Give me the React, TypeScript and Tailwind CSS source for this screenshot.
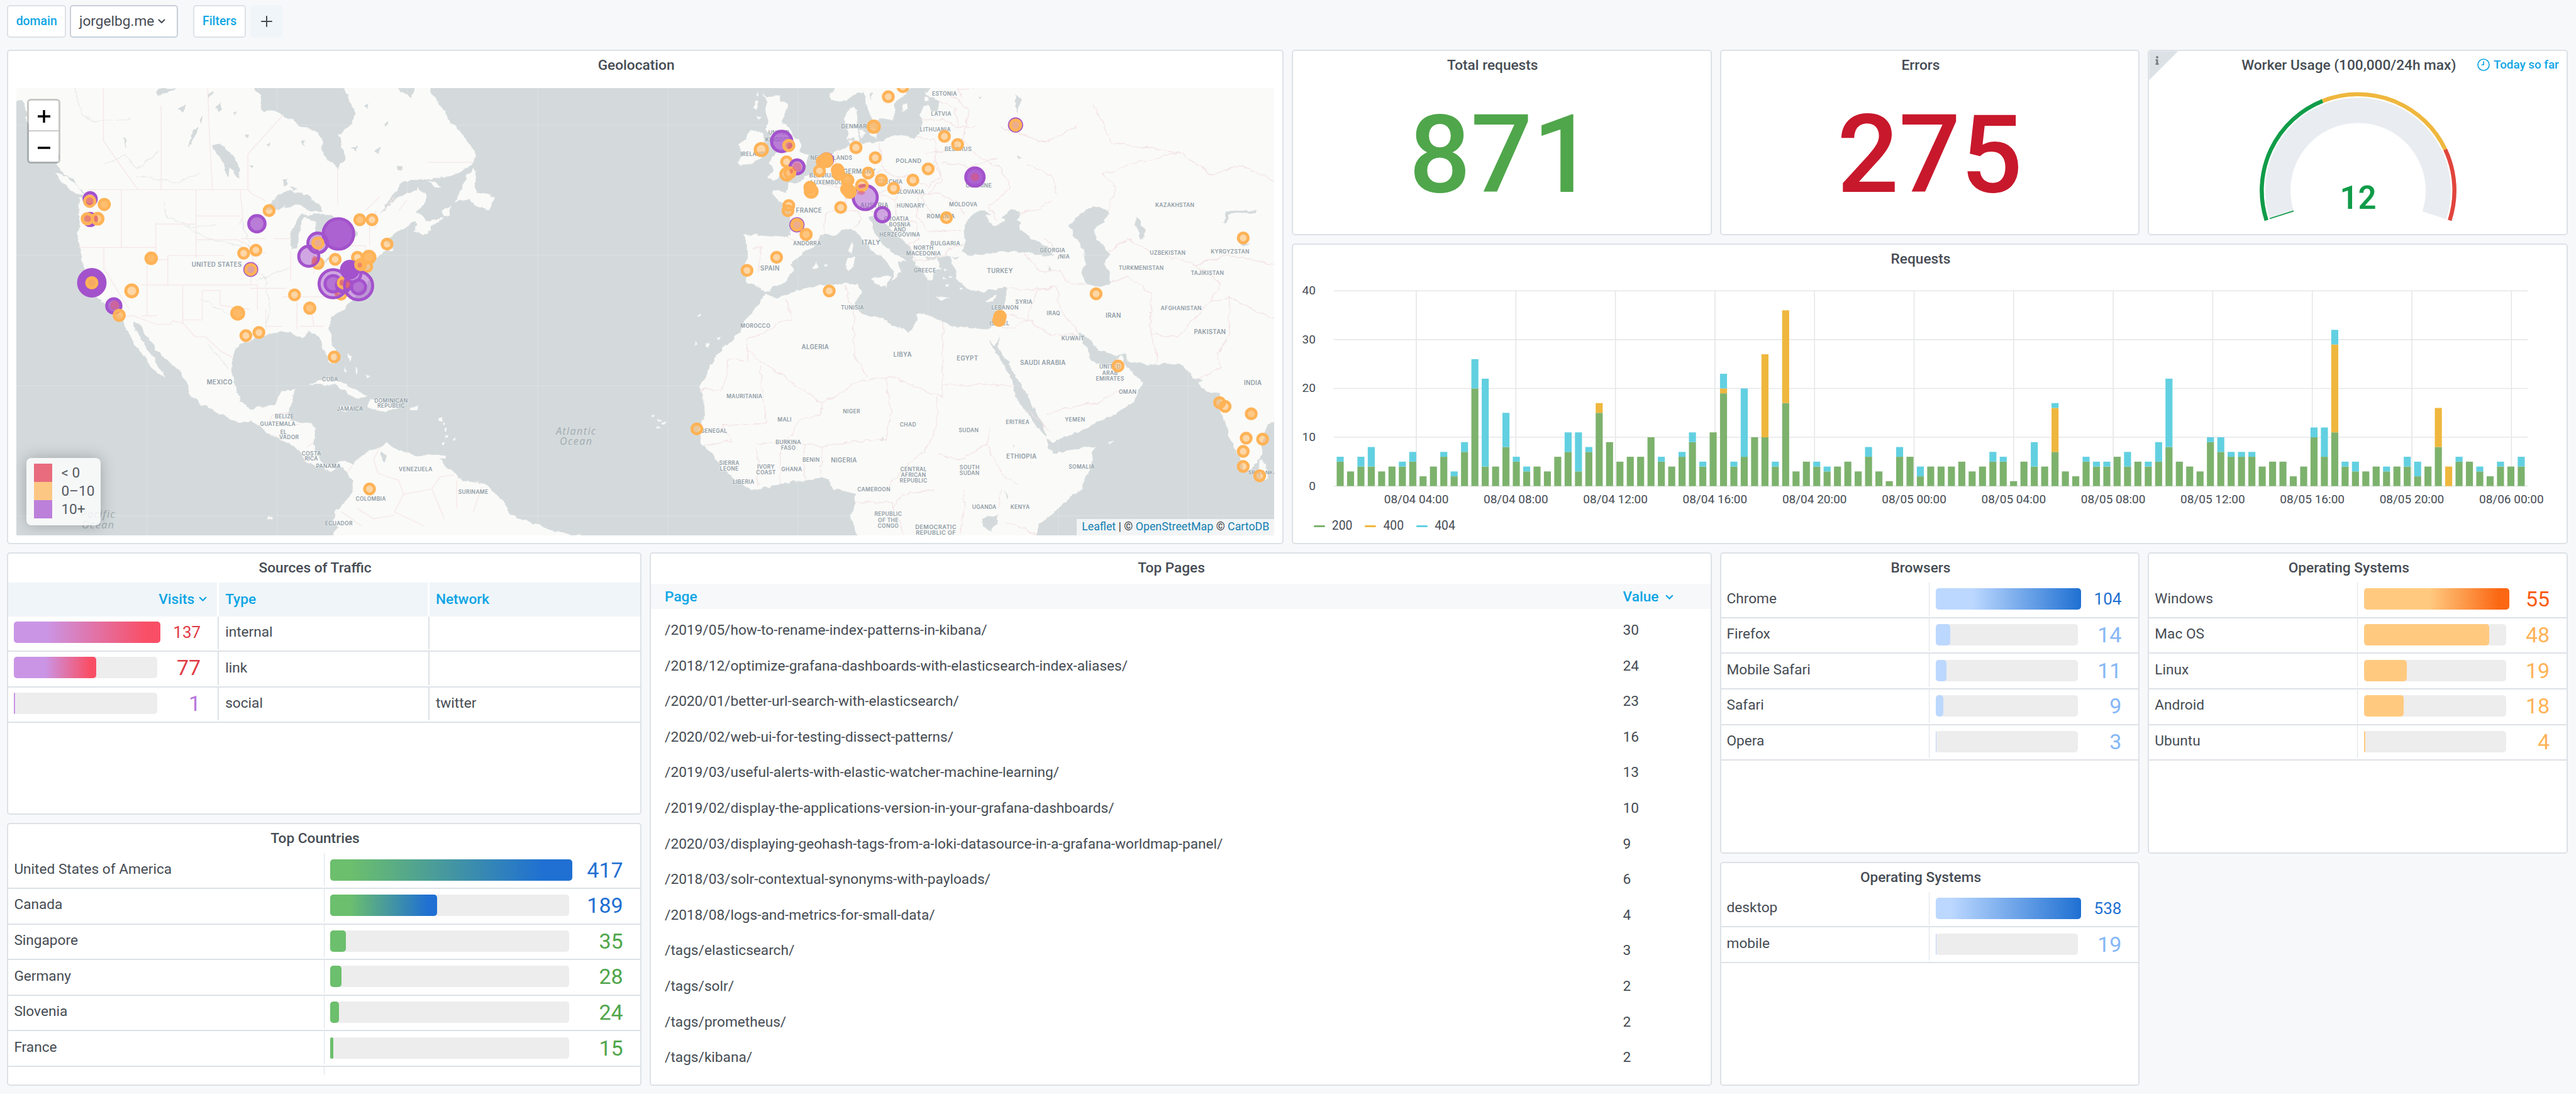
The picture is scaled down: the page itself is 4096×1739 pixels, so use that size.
import React from "react";
import { FaInfo } from "react-icons/fa";

/* ------------------------------------------------------------------ */
/* Map data                                                            */
/* ------------------------------------------------------------------ */

type Frame = { ox: number; oy: number; sx: number; sy: number };

const AMERICAS: Frame = { ox: 0, oy: 0, sx: 1.225, sy: 1.4519 };
const EAST: Frame = { ox: 1240, oy: 90, sx: 1.2062, sy: 1.5838 };
const GULF: Frame = { ox: 460, oy: 400, sx: 3, sy: 3 };
const EUROPE: Frame = { ox: 1480, oy: 160, sx: 3, sy: 3 };

const frameTransform = (f: Frame) => `translate(${f.ox} ${f.oy}) scale(${1 / f.sx} ${1 / f.sy})`;

const WATER = "#d4dadc";
const LAND = "#fafaf8";

const americasLand = [
  "M30 240L36 282 52 300 66 350 100 400 140 440 136 470 152 492 176 508 188 532 210 556 202 566 188 568 192 600 190 640 186 690 195 722 205 780 220 822 235 850 260 870 280 890 295 905 300 930 318 962 325 985 345 1010 362 1046 378 1062 395 1080 391 1064 375 1030 362 1002 343 975 327 945 322 918 336 925 350 955 365 980 377 1000 402 1025 432 1060 450 1090 455 1120 482 1150 530 1182 580 1206 602 1198 622 1216 660 1245 690 1262 702 1268 725 1292 738 1320 770 1332 795 1346 815 1328 830 1332 838 1350 848 1370 848 1400 830 1432 808 1465 800 1490 815 1502 800 1527V1560H1400V1527L1378 1527 1330 1510 1300 1500 1262 1485 1225 1468 1220 1445 1197 1410 1165 1380 1122 1372 1095 1352 1070 1328 1058 1310 1070 1296 1000 1300 970 1290 952 1280 930 1265 905 1280 882 1290 860 1310 848 1328 830 1314 800 1325 780 1320 762 1300 755 1262 760 1225 750 1205 700 1200 695 1180 700 1150 712 1108 680 1115 662 1150 632 1162 602 1165 580 1145 565 1100 558 1050 565 1000 575 985 602 970 635 955 680 945 702 950 725 965 745 945 770 960 775 990 790 1025 805 1042 812 1010 800 970 790 930 805 900 830 874 850 854 862 832 885 810 890 790 880 770 892 748 902 738 922 722 946 712 945 700 932 690 945 668 970 652 1000 630 1000 660 1018 670 1050 640 1064 622 1028 628 1002 605 1022 582 1026 556 1010 535 985 545 950 570 915 610 940 560 970 520 990 510 1020 512 1070 505 1110 490 1140 465 1145 432 1125 400 1105 370 1080 340 1062 300 1040 270 1035 240H1000L990 275 965 262 955 240H828L840 280 856 320 850 350 815 385 820 410 832 455 812 482 795 460 780 440 775 400 765 375 735 362 690 335 660 312 632 318 625 270 600 240Z",
  "M134 490L160 500 185 528 208 560 190 552 165 535 142 508Z",
  "M1140 476L1125 500 1112 540 1096 574 1130 570 1150 590 1182 597 1187 560 1168 546 1150 548 1142 530 1148 500Z",
  "M1028 515L1050 518 1063 534 1048 532Z",
  "M1064 600L1086 588 1082 612 1066 618Z",
  "M745 1102L760 1088 785 1080 822 1090 860 1112 888 1130 850 1136 832 1116 795 1096 762 1096Z",
  "M886 1158L892 1140 925 1138 965 1162 925 1170 888 1165Z",
  "M818 1160L846 1160 846 1172 820 1170Z",
  "M984 1160H1008V1168H986Z",
  "M1058 1296H1072V1308H1060Z",
  "M648 1470L658 1478 652 1482 644 1478Z",
  "M836 1012L848 1018 846 1032 840 1022ZM852 1050L862 1060 858 1066ZM878 1068L890 1078 884 1080ZM832 1040L838 1056 832 1060Z",
  "M1060 1190h5v8h-5zM1066 1206h5v8h-5zM1070 1222h5v8h-5zM1072 1238h5v8h-5zM1066 1262h5v8h-5zM1090 1248h5v5h-5z",
];

const americasWater = [
  "M636 596L652 580 672 552 700 544 740 556 772 590 778 602 750 600 720 582 690 590 660 600Z",
  "M512 412L530 408 560 440 578 480 574 508 560 490 545 470 530 450 518 436Z",
  "M540 440L552 480 550 502 540 480Z",
  "M378 262L392 250 430 250 400 262 384 270Z",
  "M918 1290L930 1296 930 1312 922 1318Z",
  "M430 310L444 298 440 320ZM460 372L478 360 468 392 452 420 458 396ZM520 300L534 290 530 318ZM682 510L694 508 692 526 684 528ZM600 470L608 466 606 480ZM810 335L826 330 822 352 808 356ZM955 470L970 472 968 486 958 484ZM902 425L918 420 912 436ZM850 420L862 416 858 430ZM700 530L720 540 708 544ZM590 385L598 380 596 394ZM640 410L650 408 646 418ZM300 390L306 400 300 420ZM500 270L512 262 506 282ZM725 405L735 400 732 415ZM880 300L890 296 886 310ZM925 350L938 348 930 360ZM560 320L568 316 566 330ZM480 340L488 330 484 350Z",
  "M36 300L50 320 62 360 56 360 44 330ZM40 285L56 290 66 330 60 330Z",
];

const gulfWater = [
  "M345 272L330 222 340 150 362 110 400 68 424 66 396 120 384 170 384 222 370 264Z",
  "M410 74L440 62 500 60 560 70 600 86 560 100 530 150 520 172 492 172 484 150 470 100 440 80Z",
  "M700 186L716 150 726 170 722 190Z",
  "M470 390L560 330 580 300 520 350Z",
];

const eastLand = [
  "M320 765L305 750 275 740 270 700 268 690 278 650 275 615 270 590 290 585 330 590 370 593 378 585 382 545 380 520 360 485 335 462 335 450 370 455 375 430 400 424 415 405 435 395 450 370 470 340 500 320 520 313 515 280 510 240 510 205 530 185 537 200 540 240 530 262 538 290 550 302 570 302 600 290 622 280 650 275 672 290 686 270 692 240 685 212 692 185 702 182 715 205 730 198 732 170 710 160 702 150 715 120H1560V1160L1527 1165 1508 1182 1500 1220 1497 1262 1490 1290 1462 1328 1450 1300 1430 1240 1410 1180 1400 1130 1396 1082 1370 1078 1345 1050 1360 1040 1335 1030 1320 1005 1300 987 1240 992 1182 982 1172 955 1150 962 1112 950 1085 912 1060 888 1066 905 1080 935 1090 968 1105 992 1132 995 1166 962 1176 1000 1216 1046 1192 1110 1142 1150 1062 1200 1000 1232 988 1226 980 1182 950 1110 920 1040 892 980 872 935 876 900 864 936 850 912 843 890 860 940 880 980 905 1040 912 1090 935 1132 960 1180 988 1222 986 1250 1010 1268 1100 1245 1095 1290 1067 1380 1022 1430 970 1490 950 1560H545L530 1495 520 1470 530 1420 535 1395 510 1387 480 1377 470 1352 450 1346 400 1355 340 1370 290 1384 260 1362 215 1312 190 1265 165 1232 160 1200 175 1150 172 1100 164 1060 200 970 225 932 260 890 270 850 300 812Z",
  "M288 264L314 270 320 298 312 350 262 376 254 362 270 340 257 305 270 290Z",
  "M1494 1288L1508 1308 1512 1345 1498 1352 1488 1330Z",
  "M1130 1232L1144 1234 1136 1240Z",
  "M152 920l8 10-8 6zM176 930l10-4-6 14zM204 908l10-4-6 14zM160 834h8v5h-8zM62 1160h8v6h-8zM74 1172h8v6h-8zM60 1186h10v6h-10zM50 1150h6v6h-6z",
];

const mediterranean =
  "M300 772L330 762 336 750 366 738 380 715 386 700 382 680 400 650 440 620 446 590 480 586 500 576 520 568 536 580 546 600 570 632 602 662 626 702 620 732 630 722 640 700 634 672 656 668 626 645 610 630 590 606 576 572 566 532 588 528 598 546 612 562 640 600 666 626 670 670 690 692 705 732 718 726 720 702 736 692 726 662 756 655 762 672 770 702 776 732 800 755 830 766 860 756 892 750 890 790 880 832 865 870 845 880 800 875 770 880 720 846 696 832 680 838 676 862 660 890 620 870 592 850 546 832 530 800 546 772 540 740 500 742 440 746 386 762 346 786 322 772 300 790Z";

const eastWater = [
  "M830 508L800 540 790 575 792 606 786 640 800 648 840 650 882 636 930 642 972 650 1004 652 986 624 950 600 922 570 926 546 916 540 924 516 900 508 880 536 850 540 856 522Z",
  "M1095 498L1060 530 1040 565 1056 602 1076 640 1080 682 1066 702 1080 738 1112 752 1136 738 1136 702 1124 672 1138 650 1130 636 1108 600 1098 570 1120 548 1134 520 1122 505Z",
  "M1198 530L1206 540 1222 570 1216 598 1206 592 1200 560Z",
  "M1405 545L1410 516 1440 508 1486 512 1482 520 1440 518 1420 524 1412 548Z",
  "M834 1470L872 1460 868 1490 854 1510 836 1496Z",
  "M1440 612h28l-12 10zM886 1380l8 30-4 2zM990 680l8 16-6 4zM916 340l12 8-8 6zM908 1240l4 12-4 4zM592 1218l6 8-4 4zM915 150l10 16-8 40-4-20z",
  "M700 655l20 2 8 6-20 4zM756 654l26 2-10 6z",
];

const eastIslands = [
  "M570 722L616 718 606 752 580 738Z",
  "M514 660L530 655 530 690 516 702 510 680Z",
  "M520 622L528 610 528 648 518 640Z",
  "M720 778L738 780 758 784 736 788Z",
  "M838 790L870 778 858 796Z",
  "M430 686L442 676 446 686 436 692ZM458 680h10v5h-10z",
  "M842 526L866 520 886 546 866 560 850 546Z",
  "M744 690l8 6-6 4zM756 712l8 6-6 4zM738 720l8 4-6 4zM748 740l8 4-6 6zM780 752l8 6-6 4z",
];

const europeLand = [
  "M488 20L455 70 470 100 522 118 560 104 590 80 632 64 655 60 670 130 690 192 712 234 745 236 752 212 822 226 840 172 836 130 862 95 900 70 940 20Z",
  "M60 60L88 92 140 74 162 80 160 112 206 140 190 190 165 235 202 246 232 310 280 362 286 420 326 430 322 480 292 512 250 536 182 546 120 582 90 566 130 520 112 492 98 470 130 420 150 400 118 372 106 340 110 300 80 284 92 232 72 180 92 130Z",
  "M628 290L650 280 664 310 640 330ZM700 262L732 280 724 330 700 320 690 290ZM886 140L912 120 906 160 890 182Z",
  "M1020 60L1050 56 1046 84 1020 82ZM1018 98h22v16h-22z",
  "M0 150l20-40 16 10-14 40zM24 70l16-12v30zM30 200l20 10-10 16z",
  "M562 240L600 200 620 260 630 340 570 350Z",
];
const europeWater = ["M655 90l20 40-10 10zM1330 92l18 2-12 12zM690 80l20-20-10 50zM560 352l30-30 6 30z"];

const borders = {
  americas:
    "M212 540H597L607 552 640 572M249 250V400L290 470 332 540M388 300V540M500 250L505 400 512 540M597 540V438L683 325M813 480V580M1030 462H1140M292 540V705M190 705H375V740M375 635V705M375 638H472M472 540V735M472 615H580M472 683H572L600 700M250 705V765L310 880M354 740V900M375 740H404M404 728H540M404 728V812M340 812H620M440 812V925M340 900H378M487 828V912H440M487 828H530V870L602 882M604 770V812M602 822H690M620 812V882M640 880V930M578 540L585 620 576 640M580 680H640M600 700L610 720H640M610 740V770M660 680H700M715 850V940M746 855L756 930M720 930H780M640 930H680M680 846H780L862 832M700 715V800M756 720V780M800 700H880M880 700V730M890 640V700M905 600V650M925 600L950 560M960 600L980 570M880 600L915 560M290 905L320 900 378 925H410L415 915 440 920 470 960 495 960 530 1000 560 1020M645 1215L655 1185 672 1180 695 1176M690 1215L720 1210M740 1275L755 1262M838 1345L848 1330M915 1275L900 1310 910 1350 960 1370 972 1410 950 1460 1020 1500M972 1410L1040 1395 1060 1360M1100 1370V1450M1160 1390L1140 1460M860 1450L900 1480 950 1470M1060 1360L1095 1355M1040 1395L1070 1480M822 1460L870 1500",
  east:
    "M370 790L382 850 350 860 320 890 277 912V978H232L219 1070H165M277 950L455 1112 550 1040 605 1035M455 1112L450 1150 400 1165 372 1230 300 1240M305 995L322 1175 215 1182M512 745L515 790 528 830 530 960 560 1030M740 860V1092L615 1030 605 1035 618 1130 605 1225M740 1055H905M725 1095V1180L705 1250 660 1300 605 1380M455 1250L530 1230 605 1225M455 1250L450 1340M730 1270L780 1290 845 1240 850 1190M845 1240L880 1330 920 1370M300 1250V1370M355 1260V1365M412 1240V1350M380 1230L455 1250M215 1182L240 1230 175 1240M935 1130L1000 1200M985 1145L1060 1120 1110 1110 1175 1060M875 830L940 850 965 760 1010 750 1020 820 1060 890M880 870L910 880 940 850 1000 900 1060 895M893 750L935 760 1010 750M1020 700L1040 740 1080 740M930 640L970 700 1020 700M1135 735L1180 720 1235 770 1235 900 1250 985M1235 900L1300 905 1370 800 1400 740 1340 680 1235 640 1180 600 1130 640M1340 680L1420 650 1527 680M1370 800L1420 780 1420 900 1390 960 1400 1000 1340 1040M1420 780L1527 850M1130 520L1150 440 1120 400 1180 370 1300 330 1380 400 1450 370 1527 420M1000 480L960 510 920 520M870 540L850 500 900 440 880 380 820 340 790 290 800 200 760 150M790 290L740 330 700 330M720 330L740 420 690 470 720 530M940 370L1000 400 1010 460M530 1420H620V1440L650 1520M620 1440L640 1400 720 1380M790 1380V1460L780 1520M880 1380L870 1440M890 1480L960 1520M980 600L1020 640M1100 180L1140 300 1300 330M880 250L980 300 1060 250",
  europe:
    "M985 225L1130 220 1200 270 1320 260M965 325L1060 340 1085 360 1070 480 1110 560 1040 620 930 560 860 560 770 520 760 420 740 350M1110 480L1270 495 1360 480 1440 440M760 520L640 600 750 650 860 600M570 340L620 350M500 400L490 480 470 560 500 620 560 660 540 760 620 760M400 540L470 560M330 545L420 600 500 620M200 915L300 960 400 920M0 980L50 980 40 1120M860 560L870 640 960 660 1110 660 1200 700 1250 780M740 660L830 700 870 640M830 700L850 800 960 830 980 920 920 960M800 760L830 830 900 860M980 680L970 790 1040 880 1230 880M920 960L960 1060 1140 1030 1160 980 1240 960M1320 36L1210 40 1230 100M1090 110L1200 160 1210 270M620 760L640 800 590 860M660 760L740 770 800 760M420 920L430 780 500 740",
};

const riverPaths =
  "M180 250L200 330 230 345 310 340M250 470L300 440 330 480 380 430M395 570L400 620 470 650 520 640M580 620L600 700 610 760 640 800 650 880 640 940M440 640L500 680 580 700M330 500L430 520 480 490M620 800L700 760M480 850L560 900M550 1050L500 980";

type Marker = [x: number, y: number, r: number, kind: "o" | "p", fill?: number];

const gulfMarkers: Marker[] = [
  [207, 39, 38, "o"], [135, 117, 57, "p", 0.75], [57, 291, 38, "o"], [129, 273, 38, "o"],
  [99, 387, 44, "p", 0.6], [99, 387, 39, "o", 0.45], [22, 645, 44, "o", 0.9], [70, 777, 38, "o"], [147, 759, 38, "o"],
  [357, 537, 38, "o"], [447, 615, 39, "o", 0.75], [591, 903, 38, "o"], [742, 93, 38, "o", 0.75],
  [814, 93, 38, "o"], [903, 237, 38, "o"], [597, 327, 38, "o"], [495, 350, 39, "o", 0.8],
  [441, 309, 68, "p"], [494, 230, 67, "p"], [616, 177, 99, "p", 0.9], [495, 231, 39, "o", 0.6],
  [728, 315, 38, "o"], [796, 314, 44, "o", 0.9], [783, 370, 38, "o"],
  [632, 532, 38, "o"], [585, 471, 92, "p"], [585, 471, 57, "p", 0.6], [645, 480, 50, "p", 0.7],
  [645, 465, 39, "o", 0.6], [735, 483, 92, "p", 0.5], [683, 388, 58, "p", 1], [700, 410, 58, "p", 0.2],
  [735, 490, 50, "p", 0.6], [748, 358, 39, "o", 0.9],
];
const gulfReds: [number, number, number, number][] = [
  [475, 333, 17, 26], [672, 475, 15, 24], [635, 465, 12, 16], [608, 532, 14, 8], [742, 360, 12, 14],
];

const americasMarkers: Marker[] = [
  [217, 566, 15, "p"], [216, 573, 13, "o"], [251, 582, 13, "o", 0.85], [217, 625, 15, "p"],
  [210, 623, 13, "o", 0.7], [235, 623, 13.5, "o", 0.7], [364, 736, 13.3, "o", 0.9], [221, 806, 29, "p", 1],
  [221, 806, 13, "o", 0.9], [317, 829, 14.6, "o"], [274, 872, 17, "p", 0.8], [287, 899, 13, "o", 0.75],
  [890, 1395, 12.7, "o"],
];

const europeMarkers: Marker[] = [
  [800, 87, 38, "o"], [886, 28, 38, "o"], [714, 264, 42, "o", 0.75], [171, 351, 69, "p", 0.75], [213, 375, 39, "o", 0.5],
  [51, 399, 45, "o"], [200, 471, 38, "o"], [262, 501, 50, "p"], [200, 545, 43, "o"], [219, 536, 39, "o"],
  [609, 387, 39, "o"], [723, 447, 38, "o"], [435, 460, 45, "p", 0.9], [411, 470, 39, "o", 0.9], [434, 455, 40, "o", 1],
  [436, 468, 40, "o", 1], [394, 525, 38, "o"], [501, 520, 40, "o", 1], [507, 542, 40, "o", 0.9], [681, 537, 38, "o"],
  [664, 682, 80, "p"], [560, 580, 40, "o", 0.9], [557, 632, 41, "o", 1], [572, 648, 42, "o", 1], [759, 579, 39, "o", 0.75],
  [831, 627, 38, "o"], [644, 610, 40, "o"], [338, 622, 39, "o", 0.9], [345, 645, 44, "o", 0.9], [213, 729, 38, "o"],
  [208, 760, 38, "o"], [261, 843, 45, "p"], [261, 843, 40, "o", 0.6], [315, 900, 39, "o", 0.75], [519, 741, 38, "o"],
  [765, 783, 51, "p"], [1131, 321, 38, "o"], [1209, 369, 38, "o"], [1035, 513, 38, "o"], [945, 579, 38, "o"],
  [1311, 561, 63, "p", 0.9], [1143, 801, 38, "o"], [141, 1035, 38, "o"],
];
const europeReds: [number, number, number, number][] = [
  [262, 501, 28, 28], [217, 376, 16, 18], [228, 526, 10, 14], [646, 612, 22, 12], [640, 654, 22, 12], [1311, 561, 24, 24],
];

const eastMarkers: Marker[] = [
  [913, 245, 15, "p"], [913, 245, 13, "o", 0.6], [1453, 597, 12.7, "o"], [276, 698, 12.7, "o"], [471, 762, 12.7, "o"],
  [1104, 771, 12.7, "o"], [876, 842, 13.3, "o", 1], [874, 853, 13.3, "o", 0.9], [1156, 996, 12.7, "o"], [157, 1192, 12.7, "o"],
  [1397, 1110, 12.7, "o"], [1410, 1122, 12.7, "o"], [1472, 1145, 12.7, "o", 0.7], [1460, 1221, 12.7, "o"],
  [1499, 1224, 12.7, "o"], [1453, 1262, 12.7, "o"], [1453, 1309, 12.7, "o"], [1492, 1338, 12.7, "o"],
];

type Label = [text: string, x: number, y: number, size?: number];

const americasLabels: Label[] = [
  ["UNITED STATES", 522, 754, 12], ["MEXICO", 529, 1090, 12], ["CUBA", 795, 1081], ["JAMAICA", 843, 1166],
  ["DOMINICAN", 942, 1143], ["REPUBLIC", 942, 1157], ["BELIZE", 685, 1188], ["GUATEMALA", 669, 1210], ["EL", 683, 1233],
  [".VADOR", 694, 1248], ["COSTA", 750, 1294], ["RICA", 750, 1308], ["PANAMA", 791, 1329], ["VENEZUELA", 1001, 1338],
  ["COLOMBIA", 893, 1423], ["SURINAME", 1140, 1403], ["ECUADOR", 816, 1494],
];
const eastLabels: Label[] = [
  ["KAZAKHSTAN", 1291, 495], ["UZBEKISTAN", 1274, 644], ["KYRGYZSTAN", 1422, 639], ["TURKMENISTAN", 1211, 690],
  ["TAJIKISTAN", 1368, 707], ["GEORGIA", 1001, 635], ["/NIA", 1027, 656], ["TURKEY", 876, 699, 12], ["GREECE", 698, 699],
  ["SYRIA", 933, 797], ["LEBANON", 888, 814], ["IRAQ", 1003, 832], ["IRAN", 1145, 839, 12], ["AFGHANISTAN", 1306, 816],
  ["PAKISTAN", 1374, 889, 12], ["KUWAIT", 1049, 911], ["ISRAEL", 875, 864], ["SAUDI ARABIA", 978, 985, 12],
  ["EGYPT", 799, 972, 12], ["LIBYA", 645, 960, 12], ["ALGERIA", 438, 937, 12], ["MOROCCO", 296, 871], ["TUNISIA", 526, 814],
  ["UNITED", 1137, 998], ["ARAB", 1137, 1017], ["EMIRATES", 1137, 1035], ["OMAN", 1179, 1076], ["INDIA", 1476, 1048, 12],
  ["YEMEN", 1054, 1163], ["ERITREA", 918, 1171], ["MAURITANIA", 270, 1090], ["MALI", 365, 1163], ["NIGER", 524, 1138],
  ["CHAD", 658, 1178], ["SUDAN", 802, 1197], ["SENEGAL", 198, 1199], ["BURKINA", 374, 1234], ["FASO", 374, 1251],
  ["BENIN", 428, 1289], ["NIGERIA", 506, 1289, 12], ["SIERRA", 234, 1298], ["LEONE", 234, 1315], ["IVORY", 321, 1310],
  ["COAST", 321, 1327], ["GHANA", 382, 1318], ["LIBERIA", 268, 1358], ["CENTRAL", 671, 1318], ["AFRICAN", 671, 1336],
  ["REPUBLIC", 671, 1354], ["SOUTH", 804, 1312], ["SUDAN", 804, 1330], ["ETHIOPIA", 927, 1278, 12], ["SOMALIA", 1070, 1311],
  ["CAMEROON", 577, 1380], ["UGANDA", 839, 1436], ["KENYA", 924, 1436], ["REPUBLIC", 611, 1458], ["OF THE", 611, 1476],
  ["CONGO", 611, 1494], ["DEMOCRATIC", 724, 1497, 11.5], ["REPUBLIC OF", 724, 1515, 11.5], ["SRI LANKA", 1499, 1327, 10],
];
const europeLabels: Label[] = [
  ["ESTONIA", 1132, 68], ["LATVIA", 1112, 189], ["DENMARK", 610, 262, 11], ["LITHUANIA", 1078, 281], ["UNITED", 155, 301],
  ["KINGDOM", 155, 339], ["IRELAND", 0, 425], ["NETHERLANDS", 464, 448], ["POLAND", 920, 464, 11.5], ["BELARUS", 1212, 396, 11],
  ["GERMANY", 630, 527, 12], ["BELGIUM", 415, 550, 11.5], ["LUXEMBOURG", 460, 594], ["CZECHIA", 810, 591], ["SLOVAKIA", 930, 650],
  ["UKRAINE", 1334, 610, 11], ["AUSTRIA", 718, 729, 12], ["HUNGARY", 933, 730], ["MOLDOVA", 1242, 724], ["FRANCE", 332, 759, 12],
  ["ROMANIA", 1110, 790, 11], ["CROATIA", 848, 810], ["BOSNIA", 868, 840], ["AND", 868, 871], ["HERZEGOVINA", 868, 902],
  ["ANDORRA", 321, 953], ["ITALY", 699, 947, 12.5], ["BULGARIA", 1137, 950, 11], ["NORTH", 1008, 981], ["MACEDONIA", 1008, 1011],
  ["SPAIN", 102, 1099, 12],
];

function MapLabels({ frame, items }: { frame: Frame; items: Label[] }) {
  return (
    <>
      {items.map(([t, x, y, size = 10.5], i) => (
        <text
          key={t + i}
          x={frame.ox + x / frame.sx}
          y={frame.oy + y / frame.sy}
          fontSize={size}
          dominantBaseline="central"
          textAnchor="middle"
        >
          {t}
        </text>
      ))}
    </>
  );
}

function Markers({ frame, items, unit }: { frame: Frame; items: Marker[]; unit: number }) {
  return (
    <>
      {items.map(([x, y, r, kind, fill = 0.5], i) => {
        const color = kind === "o" ? "#ffb357" : "#a352cc";
        return (
          <circle
            key={i}
            cx={frame.ox + x / frame.sx}
            cy={frame.oy + y / frame.sy}
            r={r / unit - 3}
            fill={color}
            fillOpacity={fill}
            stroke={color}
            strokeWidth={6}
          />
        );
      })}
    </>
  );
}

function Reds({ frame, items }: { frame: Frame; items: [number, number, number, number][] }) {
  return (
    <>
      {items.map(([x, y, rx, ry], i) => (
        <ellipse
          key={i}
          cx={frame.ox + x / frame.sx}
          cy={frame.oy + y / frame.sy}
          rx={rx / frame.sx}
          ry={ry / frame.sy}
          fill="#e25468"
          fillOpacity={0.5}
        />
      ))}
    </>
  );
}

function Shapes({ frame, paths, fill }: { frame: Frame; paths: string[]; fill: string }) {
  return (
    <g transform={frameTransform(frame)} fill={fill}>
      {paths.map((d) => (
        <path key={d} d={d} />
      ))}
    </g>
  );
}

function BorderLines({ frame, d, stroke }: { frame: Frame; d: string; stroke: string }) {
  return (
    <path
      transform={frameTransform(frame)}
      d={d}
      fill="none"
      stroke={stroke}
      strokeWidth={1.2}
      vectorEffect="non-scaling-stroke"
    />
  );
}

function WorldMap() {
  return (
    <svg viewBox="32 172 2474 880" preserveAspectRatio="none" className="block h-full w-full">
      <defs>
        <filter id="coast" x="0" y="0" width="1" height="1">
          <feTurbulence type="fractalNoise" baseFrequency="0.06" numOctaves="3" seed="4" />
          <feDisplacementMap in="SourceGraphic" scale="11" xChannelSelector="R" yChannelSelector="G" />
        </filter>
      </defs>
      <rect x="32" y="172" width="2474" height="880" fill={WATER} />
      <g filter="url(#coast)">
        <rect x="0" y="130" width="2600" height="980" fill={WATER} />
        <Shapes frame={AMERICAS} paths={americasLand} fill={LAND} />
        <Shapes frame={AMERICAS} paths={americasWater} fill={WATER} />
        <Shapes frame={GULF} paths={gulfWater} fill={WATER} />
        <Shapes frame={EAST} paths={eastLand} fill={LAND} />
        <Shapes frame={EUROPE} paths={europeLand} fill={LAND} />
        <Shapes frame={EUROPE} paths={europeWater} fill={WATER} />
        <Shapes frame={EAST} paths={[mediterranean, ...eastWater]} fill={WATER} />
        <Shapes frame={EAST} paths={eastIslands} fill={LAND} />
        <BorderLines frame={EAST} d={borders.east} stroke="#f3e2e3" />
        <BorderLines frame={EUROPE} d={borders.europe} stroke="#f3e2e3" />
        <BorderLines frame={AMERICAS} d={riverPaths} stroke="#e6e9ea" />
      </g>
      <BorderLines frame={AMERICAS} d={borders.americas} stroke="#f5e6e6" />
      <path
        d="M289 172V1052M545 172V1052M801 172V1052M1057 172V1052M1313 172V1052M1569 172V1052M1825 172V1052M2081 172V1052M2337 172V1052M32 245H2506M32 501H2506M32 757.500H2506M32 1013.500H2506"
        stroke="#ffffff"
        strokeOpacity="0.28"
        strokeWidth="1"
      />
      <g
        fontFamily='Inter, "Open Sans", sans-serif'
        fontWeight="600"
        fill="#8f9ca6"
        stroke="#fafaf8"
        strokeWidth="1.4"
        strokeOpacity="0.7"
        letterSpacing="0.4"
        style={{ paintOrder: "stroke" }}
      >
        <MapLabels frame={AMERICAS} items={americasLabels} />
        <MapLabels frame={EAST} items={eastLabels} />
        <MapLabels frame={EUROPE} items={europeLabels} />
      </g>
      <g fontFamily='"Open Sans", sans-serif' fontStyle="italic" fontSize="20" fontWeight="500" fill="#a2acb1" letterSpacing="1.7" textAnchor="middle">
        <text x="1133" y="854">Atlantic</text>
        <text x="1133" y="874">Ocean</text>
        <text x="193" y="1018">Pacific</text>
        <text x="193" y="1038">Ocean</text>
      </g>
      <Markers frame={AMERICAS} items={americasMarkers} unit={1} />
      <Markers frame={GULF} items={gulfMarkers} unit={3} />
      <Markers frame={EUROPE} items={europeMarkers} unit={3} />
      <Markers frame={EAST} items={eastMarkers} unit={1} />
      <Reds frame={GULF} items={gulfReds} />
      <Reds frame={EUROPE} items={europeReds} />
      <Reds
        frame={AMERICAS}
        items={[
          [216, 573, 9, 11],
          [212, 623, 7, 9],
          [231, 623, 5, 9],
          [276, 870, 11, 13],
        ]}
      />
    </svg>
  );
}

/* ------------------------------------------------------------------ */
/* Shared pieces                                                       */
/* ------------------------------------------------------------------ */

function Panel({ title, className, children }: { title: string; className: string; children?: React.ReactNode }) {
  return (
    <section
      className={`relative flex min-h-0 min-w-0 flex-col overflow-hidden rounded-[5px] border-2 border-[#dde2e7] bg-white ${className}`}
    >
      <h2 className="flex h-[46px] shrink-0 items-center justify-center pr-[29px] text-[22.65px] font-medium">{title}</h2>
      {children}
    </section>
  );
}

function Caret({ className }: { className: string }) {
  return (
    <svg viewBox="0 0 16 16" className={className} fill="none" stroke="currentColor" strokeWidth="2" strokeLinecap="round" strokeLinejoin="round">
      <path d="M3.500 5.500L8 10L12.500 5.500" />
    </svg>
  );
}

type BarCell = { value: string; width: string; fill: string; text: string; small?: boolean };

function Gauge({ cell, track, pad }: { cell: BarCell; track: string; pad: string }) {
  return (
    <div className={`flex h-full items-center justify-between pr-[27px] pb-[2px] ${pad}`}>
      <div className={`h-[34px] rounded-[5px] bg-[#ededed] ${track}`}>
        <div className={`h-full rounded-[5px] ${cell.width} ${cell.fill}`} />
      </div>
      <span className={`${cell.small ? "text-[26px]" : "text-[34px]"} leading-none ${cell.text}`}>{cell.value}</span>
    </div>
  );
}

type NamedBar = BarCell & { name: string };

function BarTable({ rows, track, partial }: { rows: NamedBar[]; track: string; partial?: boolean }) {
  return (
    <div className="flex flex-col">
      {rows.map((row) => (
        <div key={row.name} className="grid h-[56.62px] grid-cols-2 border-b-2 border-[#dde2e7]">
          <div className="mb-[2px] flex items-center border-r-[1.5px] border-[#dde2e7] pb-[2px] pl-[9px] text-[22.65px]">{row.name}</div>
          <Gauge cell={row} track={track} pad="pl-[9.500px]" />
        </div>
      ))}
      {partial && (
        <div className="grid h-[13px] grid-cols-2">
          <div className="border-r-[1.5px] border-[#dde2e7]" />
        </div>
      )}
    </div>
  );
}

/* ------------------------------------------------------------------ */
/* Panels                                                              */
/* ------------------------------------------------------------------ */

function Toolbar() {
  return (
    <div className="flex h-[79.300px] items-start pt-[8px] pl-[11.400px]">
      <div className="flex h-[51.800px] w-[93.600px] items-center justify-center rounded-[5px] border-2 border-[#dde2e7] bg-white text-[19.400px] font-medium text-[#0ea5e5]">
        domain
      </div>
      <div className="ml-[6.500px] flex h-[51.800px] w-[171.500px] items-center rounded-[5px] border-2 border-[#c7d0d9] bg-white pl-[12.500px] text-[22.65px]">
        jorgelbg.me
        <Caret className="ml-[4px] h-[16px] w-[16px]" />
      </div>
      <div className="ml-[24px] flex h-[51.800px] w-[84.200px] items-center justify-center rounded-[5px] border-2 border-[#dde2e7] bg-white text-[19.400px] font-medium text-[#0ea5e5]">
        Filters
      </div>
      <div className="ml-[6.500px] flex h-[51.800px] w-[51.800px] items-center justify-center rounded-[5px] bg-[#f0f5fa]">
        <svg viewBox="0 0 18 18" className="h-[18px] w-[18px]" stroke="#464c54" strokeWidth="2" strokeLinecap="round">
          <path d="M9 1V17M1 9H17" />
        </svg>
      </div>
    </div>
  );
}

const mapLegend = [
  { label: "< 0", color: "bg-[#e86c7d]" },
  { label: "0–10", color: "bg-[#fcc783]" },
  { label: "10+", color: "bg-[#bc80da]" },
];

function Geolocation() {
  return (
    <Panel title="Geolocation" className="col-span-12 row-span-13">
      <div className="relative mx-[12.500px] mt-[12.500px] mb-[12.500px] min-h-0 flex-1 overflow-hidden">
        <WorldMap />
        <div className="absolute top-[17px] left-[17px] flex h-[103px] w-[53.500px] flex-col overflow-hidden rounded-[6px] border-[3px] border-black/20 bg-white bg-clip-padding">
          <div className="flex flex-1 items-center justify-center border-b-2 border-[#ccc] pt-[3px]">
            <svg viewBox="0 0 20 20" className="h-[20px] w-[20px]" stroke="#000" strokeWidth="3.400">
              <path d="M10 0V20M0 10H20" />
            </svg>
          </div>
          <div className="flex flex-1 items-center justify-center pt-[3px]">
            <svg viewBox="0 0 20 20" className="h-[20px] w-[20px]" stroke="#000" strokeWidth="3.600">
              <path d="M0 10H20" />
            </svg>
          </div>
        </div>
        <div className="absolute bottom-[16px] left-[16px] h-[107px] w-[118px] rounded-[8px] bg-white/80 pt-[9.500px] pl-[12.500px] shadow-[0_0_24px_rgba(0,0,0,0.25)]">
          {mapLegend.map((item) => (
            <div key={item.label} className="flex h-[29px] items-center gap-[14px] text-[22.65px] whitespace-nowrap text-[#555b62]">
              <span className={`h-full w-[29px] shrink-0 ${item.color}`} />
              <span>{item.label}</span>
            </div>
          ))}
        </div>
        <div className="absolute right-0 bottom-0 flex h-[26px] items-center bg-white/70 px-[8px] text-[17.800px] whitespace-pre text-[#333]">
          <span className="text-[#1580b3]">Leaflet</span> | © <span className="text-[#1580b3]">OpenStreetMap</span> ©{" "}
          <span className="text-[#1580b3]">CartoDB</span>
        </div>
      </div>
    </Panel>
  );
}

function Stat({ title, value, className }: { title: string; value: string; className: string }) {
  return (
    <Panel title={title} className="col-span-4 row-span-5">
      <div className={`flex flex-1 items-center justify-center pb-[5px] text-[173px] leading-none font-medium ${className}`}>{value}</div>
    </Panel>
  );
}

const polar = (deg: number, r: number) => {
  const a = (deg * Math.PI) / 180;
  return `${(Math.sin(a) * r).toFixed(2)} ${(-Math.cos(a) * r).toFixed(2)}`;
};
const arc = (from: number, to: number, r: number) =>
  `M${polar(from, r)}A${r} ${r} 0 ${to - from > 180 ? 1 : 0} 1 ${polar(to, r)}`;

function WorkerUsage() {
  return (
    <Panel title="Worker Usage (100,000/24h max)" className="col-span-4 row-span-5">
      <div className="absolute top-0 left-0 h-[46px] w-[46px] bg-[#dce1e6] [clip-path:polygon(0_0,100%_0,0_100%)]" />
      <FaInfo className="absolute top-[8px] left-[6px] h-[14px] w-[14px] text-[#7b8087]" />
      <div className="absolute top-[11px] right-[12.500px] flex h-[22px] items-center gap-[6px] text-[18.800px] font-medium whitespace-nowrap text-[#0ea5e5]">
        <svg viewBox="0 0 20 20" className="h-[20px] w-[20px]" fill="none" stroke="currentColor" strokeWidth="1.700" strokeLinecap="round">
          <circle cx="10" cy="10" r="9" />
          <path d="M10 5V10H7.200" />
        </svg>
        Today so far
      </div>
      <div className="flex min-h-0 flex-1 justify-center">
        <svg viewBox="-206 -217.500 412 306" className="h-[247.500px] w-[333px] shrink-0" fill="none">
          <path d={arc(-108, 108, 157.700)} stroke="#e9edf1" strokeWidth="49.500" />
          <path d={`M${polar(-107.600, 133)}L${polar(-107.600, 182.500)}`} stroke="#109c49" strokeWidth="2" />
          <path d={arc(-108, -21.600, 189.500)} stroke="#109c49" strokeWidth="8" />
          <path d={arc(-21.600, 64.800, 189.500)} stroke="#efb73e" strokeWidth="8" />
          <path d={arc(64.800, 108, 189.500)} stroke="#e0453d" strokeWidth="8" />
          <text x="0" y="35.500" textAnchor="middle" fontSize="63" fontWeight="600" fill="#109c49">
            12
          </text>
        </svg>
      </div>
    </Panel>
  );
}

// [HTTP 200, HTTP 400, HTTP 404] counts per 25 minute bucket
const buckets: number[][] = [
  [5, 0, 1], [3], [4, 0, 2], [4, 0, 4], [3], [4], [4, 0, 1], [5, 0, 2], [2], [4], [6, 0, 1], [2, 0, 1], [7, 0, 2], [20, 0, 6],
  [4, 0, 18], [4], [8, 0, 7], [5, 0, 1], [3, 0, 1], [4], [3], [6], [7, 0, 4], [3, 0, 8], [7, 0, 1], [15, 2], [9], [5], [6], [6],
  [10], [5, 0, 1], [4], [6, 0, 1], [9, 0, 2], [4, 0, 1], [11], [19, 1, 3], [4, 0, 1], [6, 0, 14], [10], [10, 17], [4, 0, 1],
  [17, 19], [3], [5], [4, 0, 1], [3, 0, 1], [4], [5], [3], [6, 0, 2], [3], [1], [6, 0, 2], [6], [2, 0, 2], [4], [4], [4], [5],
  [3], [4], [5, 0, 2], [5, 0, 1], [1], [5], [4, 0, 5], [4], [7, 9, 1], [3], [2], [5, 0, 1], [4, 0, 1], [4, 0, 1], [6], [4, 0, 3],
  [5], [4, 0, 1], [5, 0, 4], [8, 0, 14], [5], [4], [3], [9, 0, 1], [7, 0, 3], [6, 0, 1], [6, 0, 1], [6, 0, 1], [4], [5], [5], [2],
  [4], [10, 0, 2], [6, 0, 6], [11, 18, 3], [4, 0, 1], [3, 0, 2], [3], [4], [3, 0, 1], [4], [4, 0, 2], [2, 0, 3], [4], [8, 8],
  [0, 4], [5, 0, 1], [5], [3, 0, 1], [2], [4, 0, 1], [4], [4, 0, 2],
];
const seriesColors = ["#7db26d", "#efb73e", "#62d0e1"];
const timeLabels = [
  "08/04 04:00", "08/04 08:00", "08/04 12:00", "08/04 16:00", "08/04 20:00", "08/05 00:00",
  "08/05 04:00", "08/05 08:00", "08/05 12:00", "08/05 16:00", "08/05 20:00", "08/06 00:00",
];

function Requests() {
  const zero = 954.7;
  const unit = 9.6;
  return (
    <Panel title="Requests" className="col-span-12 row-span-8">
      <svg viewBox="2542.200 537 2503.400 467" className="block h-[377.500px] w-full shrink-0" preserveAspectRatio="none">
        <g stroke="#e6e7e8" strokeWidth="2">
          {[0, 10, 20, 30, 40].map((v) => (
            <path key={v} d={`M2622 ${zero - v * unit}H4968.500`} />
          ))}
          {timeLabels.map((t, i) => (
            <path key={t} d={`M${2784.5 + i * 195.65} 570.500V${zero}`} />
          ))}
        </g>
        {buckets.map((b, i) => {
          let base = 0;
          return b.map((v, s) => {
            const y = zero - (base + v) * unit;
            base += v;
            return v ? (
              <rect key={`${i}-${s}`} x={2628 + i * 20.36} y={y} width={13.8} height={v * unit} fill={seriesColors[s]} />
            ) : null;
          });
        })}
        <g fontSize="23.500" fill="#464c54">
          {[0, 10, 20, 30, 40].map((v) => (
            <text key={v} x="2586.500" y={zero - v * unit + 7.5} textAnchor="end">
              {v}
            </text>
          ))}
          {timeLabels.map((t, i) => (
            <text key={t} x={2784.5 + i * 195.65} y="988.500" textAnchor="middle">
              {t}
            </text>
          ))}
        </g>
      </svg>
      <div className="mt-[3px] flex h-[40px] items-center gap-[20px] pl-[33px] text-[19.400px]">
        {[
          ["200", "bg-[#7db26d]"],
          ["400", "bg-[#efb73e]"],
          ["404", "bg-[#62d0e1]"],
        ].map(([name, color]) => (
          <div key={name} className="flex items-center gap-[11px]">
            <span className={`mt-[2px] h-[3px] w-[18px] rounded-sm ${color}`} />
            {name}
          </div>
        ))}
      </div>
    </Panel>
  );
}

const sources: { bar: BarCell; type: string; network: string }[] = [
  {
    bar: { value: "137", width: "w-[233px]", fill: "bg-[linear-gradient(90deg,#ca95e5_22%,#f94f66_90%)]", text: "text-[#e03b45]", small: true },
    type: "internal",
    network: "",
  },
  {
    bar: { value: "77", width: "w-[131px]", fill: "bg-[linear-gradient(90deg,#ca95e5_38%,#f94f66_92%)]", text: "text-[#e03b45]" },
    type: "link",
    network: "",
  },
  { bar: { value: "1", width: "w-[2px]", fill: "bg-[#ca95e5]", text: "text-[#b877d9]" }, type: "social", network: "twitter" },
];

function Sources() {
  return (
    <Panel title="Sources of Traffic" className="col-span-6 row-span-7">
      <div className="grid h-[53.400px] shrink-0 grid-cols-3 bg-[#f0f5f9] text-[22.65px] font-medium text-[#0ea5e5]">
        <div className="flex items-center justify-end gap-[5px] border-r-[3px] border-white pr-[14px]">
          Visits
          <Caret className="h-[17px] w-[17px]" />
        </div>
        <div className="flex items-center border-r-[3px] border-white pl-[10px]">Type</div>
        <div className="flex items-center pl-[10px]">Network</div>
      </div>
      {sources.map((row) => (
        <div key={row.type} className="grid h-[56.62px] shrink-0 grid-cols-3 border-b-2 border-[#dde2e7] text-[22.65px]">
          <div className="mb-[2px] border-r-2 border-[#dde2e7]">
            <Gauge cell={row.bar} track="w-[228px]" pad="pl-[9px]" />
          </div>
          <div className="mb-[2px] flex items-center border-r-2 border-[#dde2e7] pb-[2px] pl-[10px]">{row.type}</div>
          <div className="flex items-center pb-[4px] pl-[10px]">{row.network}</div>
        </div>
      ))}
    </Panel>
  );
}

const pages: [string, number][] = [
  ["/2019/05/how-to-rename-index-patterns-in-kibana/", 30],
  ["/2018/12/optimize-grafana-dashboards-with-elasticsearch-index-aliases/", 24],
  ["/2020/01/better-url-search-with-elasticsearch/", 23],
  ["/2020/02/web-ui-for-testing-dissect-patterns/", 16],
  ["/2019/03/useful-alerts-with-elastic-watcher-machine-learning/", 13],
  ["/2019/02/display-the-applications-version-in-your-grafana-dashboards/", 10],
  ["/2020/03/displaying-geohash-tags-from-a-loki-datasource-in-a-grafana-worldmap-panel/", 9],
  ["/2018/03/solr-contextual-synonyms-with-payloads/", 6],
  ["/2018/08/logs-and-metrics-for-small-data/", 4],
  ["/tags/elasticsearch/", 3],
  ["/tags/solr/", 2],
  ["/tags/prometheus/", 2],
  ["/tags/kibana/", 2],
];

function TopPages() {
  return (
    <Panel title="Top Pages" className="col-span-10 row-span-14">
      <div className="mt-[2px] mb-[5.500px] grid h-[40px] shrink-0 grid-cols-[1fr_161px] items-center bg-[#f7f8fa] pt-[2px] pl-[22.500px] text-[22.65px] font-medium text-[#0ea5e5]">
        <span>Page</span>
        <span className="flex items-center gap-[9px] pl-[22px]">
          Value
          <Caret className="h-[17px] w-[17px]" />
        </span>
      </div>
      {pages.map(([page, value]) => (
        <div key={page} className="grid h-[56.62px] shrink-0 grid-cols-[1fr_161px] items-center pl-[22.500px] text-[22.65px]">
          <span>{page}</span>
          <span className="pl-[22px]">{value}</span>
        </div>
      ))}
    </Panel>
  );
}

const green = { fill: "bg-[#6cbf6c]", text: "text-[#50a64b]" };
const countries: NamedBar[] = [
  { name: "United States of America", value: "417", width: "w-[385px]", fill: "bg-[linear-gradient(90deg,#6cbf6c_8%,#1f70d2_88%)]", text: "text-[#1f70d2]" },
  { name: "Canada", value: "189", width: "w-[170px]", fill: "bg-[linear-gradient(90deg,#6cbf6c_18%,#1f70d2_92%)]", text: "text-[#1f70d2]" },
  { name: "Singapore", value: "35", width: "w-[24.500px]", ...green },
  { name: "Germany", value: "28", width: "w-[18px]", ...green },
  { name: "Slovenia", value: "24", width: "w-[13.500px]", ...green },
  { name: "France", value: "15", width: "w-[4.700px]", ...green },
];

const blue = { fill: "bg-[#bcd8ff]", text: "text-[#86b7f7]" };
const browsers: NamedBar[] = [
  { name: "Chrome", value: "104", width: "w-[231px]", fill: "bg-[linear-gradient(90deg,#bcd8ff_25%,#1f70d2_100%)]", text: "text-[#1f70d2]", small: true },
  { name: "Firefox", value: "14", width: "w-[23.500px]", ...blue },
  { name: "Mobile Safari", value: "11", width: "w-[17.500px]", ...blue },
  { name: "Safari", value: "9", width: "w-[12px]", ...blue },
  { name: "Opera", value: "3", width: "w-[1.500px]", ...blue },
];

const devices: NamedBar[] = [
  { name: "desktop", value: "538", width: "w-[231px]", fill: "bg-[linear-gradient(90deg,#bcd8ff_10%,#1f70d2_100%)]", text: "text-[#1f70d2]", small: true },
  { name: "mobile", value: "19", width: "w-[1.500px]", ...blue },
];

const orange = { fill: "bg-[#ffca80]", text: "text-[#ffb357]" };
const systems: NamedBar[] = [
  { name: "Windows", value: "55", width: "w-[231px]", fill: "bg-[linear-gradient(90deg,#ffca80_45%,#fb6713_93%)]", text: "text-[#fa5a12]" },
  { name: "Mac OS", value: "48", width: "w-[199px]", ...orange },
  { name: "Linux", value: "19", width: "w-[68px]", ...orange },
  { name: "Android", value: "18", width: "w-[63px]", ...orange },
  { name: "Ubuntu", value: "4", width: "w-[2px]", ...orange },
];

export default function App() {
  return (
    <main className='h-[1739px] w-[4096px] overflow-hidden bg-[#f7f8fa] font-[Roboto,"Liberation_Sans",sans-serif] text-[#464c54]'>
      <Toolbar />
      <div className="mr-[12.800px] ml-[11.400px] grid auto-rows-[48.530px] grid-cols-24 gap-[12.940px]">
        <Geolocation />
        <Stat title="Total requests" value="871" className="text-[#50a64b]" />
        <Stat title="Errors" value="275" className="text-[#c8182c]" />
        <WorkerUsage />
        <Requests />
        <Sources />
        <TopPages />
        <Panel title="Browsers" className="col-span-4 row-span-8">
          <BarTable rows={browsers} track="w-[226px]" />
        </Panel>
        <Panel title="Operating Systems" className="col-span-4 row-span-8">
          <BarTable rows={systems} track="w-[226px]" />
        </Panel>
        <Panel title="Top Countries" className="col-span-6 col-start-1 row-span-7 row-start-21">
          <BarTable rows={countries} track="w-[380px]" partial />
        </Panel>
        <Panel title="Operating Systems" className="col-span-4 col-start-17 row-span-6 row-start-22">
          <BarTable rows={devices} track="w-[226px]" />
        </Panel>
      </div>
    </main>
  );
}
